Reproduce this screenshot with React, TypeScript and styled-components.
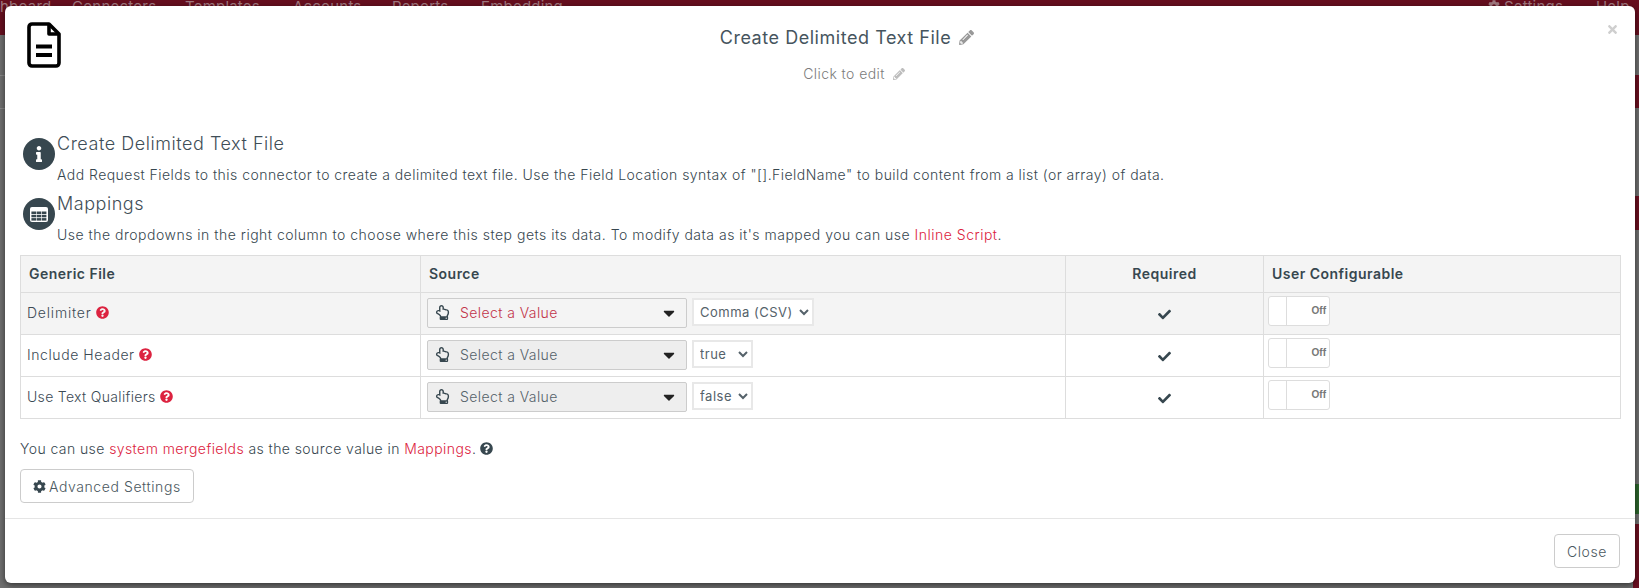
import React from "react";
import styled, { createGlobalStyle } from "styled-components";
import {
  FaCaretDown,
  FaCheck,
  FaCog,
  FaInfo,
  FaPencilAlt,
  FaQuestionCircle,
  FaRegHandPointUp,
  FaTimes,
} from "react-icons/fa";

const Global = createGlobalStyle`
  html, body { margin: 0; padding: 0; height: 100%; overflow: hidden; }
  body { font-family: Inter, "Open Sans", sans-serif; font-size: 14px; color: #3b4a54; }
  * { box-sizing: border-box; }
`;

const Page = styled.div`
  position: relative;
  width: 1639px;
  height: 588px;
  overflow: hidden;
  background: #6f6f6f;
`;

const NavBar = styled.div`
  height: 35px;
  background: #660f1f;
  display: flex;
  align-items: flex-start;
  font-size: 15px;
  line-height: 14px;
  color: #a0787f;
  letter-spacing: 0.2px;
  white-space: nowrap;
`;

const NavItem = styled.span<{ $w: number }>`
  flex: 0 0 ${(p) => p.$w}px;
  display: inline-flex;
  gap: 4px;
`;

const EdgeBands = styled.div`
  position: absolute;
  top: 35px;
  right: 0;
  bottom: 0;
  width: 6px;
  background: linear-gradient(
    to bottom,
    transparent 40px,
    #6a0f20 40px 73px,
    transparent 73px 161px,
    #6a0f20 161px 195px,
    transparent 195px 449px,
    #2c642c 449px 479px,
    transparent 479px 489px,
    #6a0f20 489px
  );
`;

const EdgeLines = styled.div`
  position: absolute;
  top: 75px;
  left: 0;
  width: 6px;
  height: 34px;
  border-top: 1px solid #888;
  border-bottom: 1px solid #888;
`;

const Overlay = styled.div`
  position: absolute;
  inset: 6px 4px 5px 5px;
`;

const Modal = styled.div`
  position: relative;
  height: 577px;
  background: #fff;
  border-radius: 6px;
  box-shadow: 0 2px 6px rgba(0, 0, 0, 0.55);
`;

const Header = styled.header`
  height: 125px;
  padding: 18px 0 0 54px;
  text-align: center;
`;

const FileIcon = styled.svg`
  position: absolute;
  left: 22px;
  top: 16px;
  width: 34px;
  height: 46px;
`;

const CloseX = styled.button`
  position: absolute;
  top: 17px;
  right: 16px;
  padding: 0;
  border: 0;
  background: none;
  color: #cfcfcf;
  display: flex;
  font-size: 13px;
`;

const Title = styled.div`
  font-size: 18px;
  line-height: 27px;
  font-weight: 400;
  letter-spacing: 0.54px;
  color: #46555e;
  display: flex;
  justify-content: center;
  align-items: center;
  gap: 8px;
  svg { color: #999; font-size: 15px; }
`;

const SubTitle = styled.div`
  margin-top: 12px;
  font-size: 14px;
  line-height: 21px;
  font-weight: 300;
  letter-spacing: 0.42px;
  color: #7c7c7c;
  display: flex;
  justify-content: center;
  align-items: center;
  gap: 8px;
  padding-left: 14px;
  svg { color: #bdbdbd; font-size: 12px; }
`;

const Body = styled.div`
  padding: 0 15px;
  height: 387px;
`;

const Section = styled.section`
  display: flex;
  height: 54px;
  margin-bottom: 6px;
`;

const Badge = styled.span`
  flex: 0 0 32px;
  height: 32px;
  margin: 7px 2px 0 3px;
  border-radius: 50%;
  background: #37474f;
  color: #fff;
  display: flex;
  align-items: center;
  justify-content: center;
  font-size: 16px;
`;

const Heading = styled.h4`
  margin: -1px 0 7px;
  font-size: 18px;
  line-height: 27px;
  font-weight: 300;
  letter-spacing: 0.54px;
  color: #3f4e57;
`;

const Para = styled.p<{ $track?: number }>`
  margin: 0;
  font-size: 14px;
  line-height: 21px;
  font-weight: 300;
  letter-spacing: ${(p) => p.$track ?? 0.42}px;
  color: #37474f;
  white-space: nowrap;
`;

const Link = styled.a`
  color: #dc2340;
  text-decoration: none;
`;

const Table = styled.table`
  margin-top: 10px;
  width: 1600px;
  table-layout: fixed;
  border-collapse: collapse;
`;

const Th = styled.th<{ $center?: boolean }>`
  height: 37px;
  padding: 0 8px 1px;
  border: 1px solid #ddd;
  background: #f4f4f4;
  font-size: 14px;
  font-weight: 600;
  letter-spacing: 0.48px;
  color: #37474f;
  text-align: ${(p) => (p.$center ? "center" : "left")};
`;

const Row = styled.tr<{ $shaded?: boolean }>`
  height: 42px;
  background: ${(p) => (p.$shaded ? "#f4f4f4" : "#fff")};
`;

const Td = styled.td`
  border: 1px solid #ddd;
  padding: 0 6px 2px;
  vertical-align: middle;
  font-weight: 300;
`;

const LabelCell = styled.span<{ $track: number }>`
  display: inline-flex;
  align-items: center;
  gap: 4px;
  letter-spacing: ${(p) => p.$track}px;
  svg { color: #dc2340; font-size: 13px; }
`;

const SourceRow = styled.div`
  display: flex;
  align-items: flex-start;
  gap: 5px;
`;

const ValuePicker = styled.button<{ $invalid?: boolean }>`
  width: 260px;
  height: 30px;
  padding: 0 8px 0 7px;
  border: 1px solid #ccc;
  border-radius: 2px;
  background: ${(p) => (p.$invalid ? "#f4f4f4" : "#eee")};
  color: ${(p) => (p.$invalid ? "#c23349" : "#55626a")};
  display: flex;
  align-items: center;
  font: 300 14px Inter, sans-serif;
  letter-spacing: 0.42px;
  svg:first-child { font-size: 15px; color: #37474f; margin-right: 10px; }
  svg:last-child { margin-left: auto; font-size: 18px; color: #222; }
`;

const NativeSelect = styled.select`
  height: 28px;
  padding: 0 3px 0 2px;
  border: 2px solid #e8e8e8;
  background: #fff;
  color: #55626a;
  font: 400 13px Inter, sans-serif;
  letter-spacing: 0.5px;
`;

const CheckCell = styled(Td)`
  text-align: center;
  svg { font-size: 13px; color: #37474f; display: inline-block; vertical-align: middle; }
`;

const ToggleCell = styled(Td)`
  padding: 0 4px 5px;
`;

const Toggle = styled.div`
  width: 62px;
  height: 30px;
  border: 1px solid #ddd;
  border-radius: 3px;
  background: #fff;
  display: flex;
`;

const ToggleKnob = styled.span`
  flex: 0 0 18px;
  border-right: 1px solid #ddd;
`;

const ToggleLabel = styled.span`
  flex: 1;
  padding-right: 3px;
  text-align: right;
  font: 700 10px/28px "Liberation Sans", sans-serif;
  letter-spacing: 0;
  color: #777;
`;

const Note = styled(Para)`
  margin-top: 19px;
  display: flex;
  align-items: center;
  gap: 4px;
  svg { font-size: 13px; color: #37474f; }
`;

const NoteText = styled.span``;

const OutlineButton = styled.button`
  height: 34px;
  padding: 0 12px;
  border: 1px solid #ccc;
  border-radius: 4px;
  background: #fff;
  color: #4b5860;
  display: inline-flex;
  align-items: center;
  gap: 3px;
  font: 300 14px Inter, sans-serif;
  letter-spacing: 0.58px;
  svg { font-size: 13px; color: #37474f; }
`;

const AdvancedButton = styled(OutlineButton)`
  margin-top: 10px;
`;

const Footer = styled.footer`
  border-top: 1px solid #e5e5e5;
  padding: 15px;
  display: flex;
  justify-content: flex-end;
`;

const rows = [
  { label: "Delimiter", track: 0.8, invalid: true, options: ["Comma (CSV)"], shaded: true },
  { label: "Include Header", track: 0.58, invalid: false, options: ["true", "false"], shaded: false },
  { label: "Use Text Qualifiers", track: 0.32, invalid: false, options: ["false", "true"], shaded: false },
];

function TableGlyph() {
  return (
    <svg width="18" height="15" viewBox="0 0 18 15">
      <rect width="18" height="15" rx="2" fill="#fff" />
      {[4.5, 7.8, 11.1].flatMap((y) =>
        [1.4, 6.6, 11.8].map((x) => <rect key={`${x}-${y}`} x={x} y={y} width="4.6" height="2.5" fill="#37474f" />),
      )}
    </svg>
  );
}

export default function App() {
  return (
    <Page>
      <Global />
      <NavBar>
        <NavItem $w={72}>hboard</NavItem>
        <NavItem $w={113}>Connectors</NavItem>
        <NavItem $w={108}>Templates</NavItem>
        <NavItem $w={99}>Accounts</NavItem>
        <NavItem $w={89}>Reports</NavItem>
        <NavItem $w={1007}>Embedding</NavItem>
        <NavItem $w={108}>
          <FaCog size={12} /> Settings
        </NavItem>
        <NavItem $w={43}>Help</NavItem>
      </NavBar>
      <EdgeBands />
      <EdgeLines />
      <Overlay>
        <Modal>
          <FileIcon viewBox="0 0 34 46" fill="none" stroke="#000" strokeWidth="3.6" strokeLinejoin="round">
            <path d="M5 2h17l10 10v29a3 3 0 0 1-3 3H5a3 3 0 0 1-3-3V5a3 3 0 0 1 3-3z" />
            <path d="M22 2v10h10" />
            <path d="M9 24.5h16M9 33h16" strokeWidth="3.8" />
          </FileIcon>
          <CloseX aria-label="Close">
            <FaTimes />
          </CloseX>
          <Header>
            <Title>
              Create Delimited Text File <FaPencilAlt />
            </Title>
            <SubTitle>
              Click to edit <FaPencilAlt />
            </SubTitle>
          </Header>
          <Body>
            <Section>
              <Badge>
                <FaInfo />
              </Badge>
              <div>
                <Heading>Create Delimited Text File</Heading>
                <Para $track={0.46}>
                  Add Request Fields to this connector to create a delimited text file. Use the Field Location syntax of "[].FieldName" to build content from a list (or array) of data.
                </Para>
              </div>
            </Section>
            <Section>
              <Badge>
                <TableGlyph />
              </Badge>
              <div>
                <Heading>Mappings</Heading>
                <Para $track={0.5}>
                  Use the dropdowns in the right column to choose where this step gets its data. To modify data as it's mapped you can use <Link>Inline Script</Link>.
                </Para>
              </div>
            </Section>
            <Table>
              <colgroup>
                <col width={400} />
                <col width={645} />
                <col width={198} />
                <col width={357} />
              </colgroup>
              <thead>
                <tr>
                  <Th>Generic File</Th>
                  <Th>Source</Th>
                  <Th $center>Required</Th>
                  <Th>User Configurable</Th>
                </tr>
              </thead>
              <tbody>
                {rows.map((r) => (
                  <Row key={r.label} $shaded={r.shaded}>
                    <Td>
                      <LabelCell $track={r.track}>
                        {r.label} <FaQuestionCircle />
                      </LabelCell>
                    </Td>
                    <Td>
                      <SourceRow>
                        <ValuePicker $invalid={r.invalid}>
                          <FaRegHandPointUp />
                          Select a Value
                          <FaCaretDown />
                        </ValuePicker>
                        <NativeSelect defaultValue={r.options[0]}>
                          {r.options.map((o) => (
                            <option key={o}>{o}</option>
                          ))}
                        </NativeSelect>
                      </SourceRow>
                    </Td>
                    <CheckCell>
                      <FaCheck />
                    </CheckCell>
                    <ToggleCell>
                      <Toggle>
                        <ToggleKnob />
                        <ToggleLabel>Off</ToggleLabel>
                      </Toggle>
                    </ToggleCell>
                  </Row>
                ))}
              </tbody>
            </Table>
            <Note>
              <NoteText>
                You can use <Link>system mergefields</Link> as the source value in <Link>Mappings</Link>.
              </NoteText>
              <FaQuestionCircle />
            </Note>
            <AdvancedButton>
              <FaCog /> Advanced Settings
            </AdvancedButton>
          </Body>
          <Footer>
            <OutlineButton>Close</OutlineButton>
          </Footer>
        </Modal>
      </Overlay>
    </Page>
  );
}
